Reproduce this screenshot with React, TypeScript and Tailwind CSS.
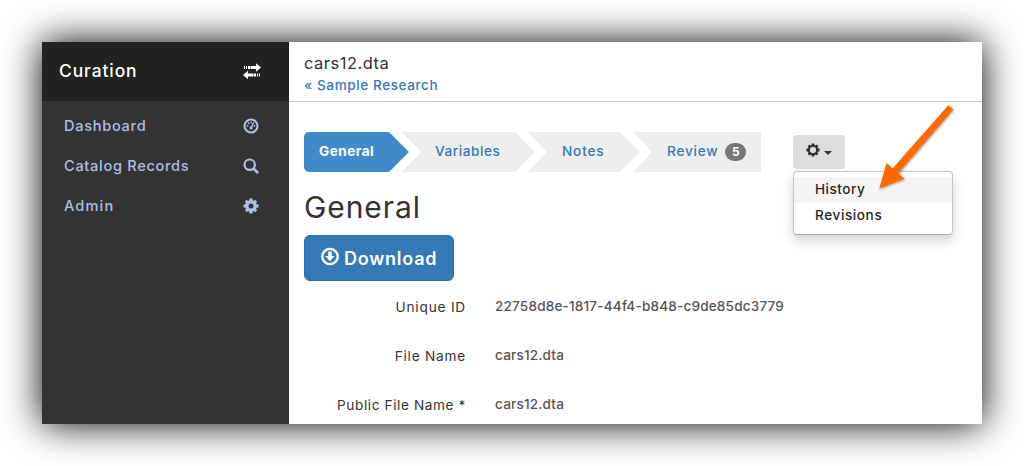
import type { ReactNode } from "react";

function Cog({ className, thin }: { className: string; thin?: boolean }) {
  return (
    <svg viewBox="0 0 16 16" className={className}>
      <g stroke="currentColor" strokeWidth="3.2">
        <path d="M8 .5v4M8 11.500v4M.5 8h4M11.500 8h4" />
        <path d="M2.800 2.800l2.600 2.600M10.600 10.600l2.600 2.600M2.800 13.200l2.600-2.600M10.600 5.400l2.600-2.600" strokeWidth="2.800" />
      </g>
      <circle cx="8" cy="8" r={thin ? 4.7 : 4.2} fill="none" stroke="currentColor" strokeWidth={thin ? 2.8 : 3.4} />
      {thin && <circle cx="8" cy="8" r="3.400" fill="#dddddd" />}
    </svg>
  );
}

function Swap() {
  return (
    <svg viewBox="0 0 18 16" className="h-4 w-[18px] -translate-y-px" fill="#fff">
      <path d="M1 3h1v3H1zM3 3h1v3H3zM5 3h2v3H5zM7.500 3h5.500V.3l5 4.200-5 4.200V6H7.500z" />
      <path d="M17 10.500h-1v3h1zM15 10.500h-1v3h1zM13 10.500h-2v3h2zM10.500 10.500H5V7.800L0 12l5 4.200v-2.700h5.500z" />
    </svg>
  );
}

function Dial() {
  return (
    <svg viewBox="0 0 16 16" className="size-4" fill="currentColor">
      <circle cx="8" cy="8" r="6.500" fill="none" stroke="currentColor" strokeWidth="2.100" />
      <circle cx="4.600" cy="7.800" r=".9" />
      <circle cx="5.800" cy="5.200" r=".9" />
      <circle cx="8.300" cy="4.600" r=".8" />
      <circle cx="11.500" cy="7.800" r=".9" />
      <path d="M10 4.200l1.300.6-2 4.200a1.500 1.500 0 1 1-1.400-.6z" />
    </svg>
  );
}

function Search() {
  return (
    <svg viewBox="0 0 16 16" className="size-4" fill="none" stroke="currentColor">
      <circle cx="6.700" cy="6.700" r="5.200" strokeWidth="2.200" />
      <path d="M10.400 10.400l4.700 4.700" strokeWidth="2.700" />
    </svg>
  );
}

function DownloadIcon() {
  return (
    <svg viewBox="0 0 18 18" className="size-[18px] -translate-y-[1.5px]">
      <circle cx="9" cy="9" r="7.700" fill="none" stroke="#fff" strokeWidth="2.400" />
      <path d="M7.200 4h3.600v4.500h2.900L9 13.800 4.300 8.500h2.900z" fill="#fff" />
    </svg>
  );
}

function NavItem({ label, icon }: { label: ReactNode; icon: ReactNode }) {
  return (
    <li className="flex h-10 items-center justify-between pr-[30px] pl-[22px] text-[14.550px] font-medium text-[#b1bfe3]">
      {label}
      {icon}
    </li>
  );
}

function Field({ label, value }: { label: ReactNode; value: ReactNode }) {
  return (
    <div className="flex h-[49px] items-start leading-5">
      <dt className="mt-px w-[162px] text-right text-[#333]">{label}</dt>
      <dd className="ml-[29px] font-medium text-[#555]">{value}</dd>
    </div>
  );
}

export default function App() {
  return (
    <div className="h-[466px] w-[1024px] overflow-hidden bg-white p-[42px] font-['Inter',sans-serif] text-[13.580px] text-[#333]">
      <div className="flex h-[382px] w-[940px] bg-white shadow-[0_0_36px_#000]">
        <aside className="w-[247px] shrink-0 bg-[#333]">
          <div className="flex h-[59px] items-center justify-between bg-[#222] pr-[28px] pl-[17px] text-[17.460px] font-medium tracking-[0.910px] text-white">
            Curation
            <Swap />
          </div>
          <ul className="pt-[5px]">
            <NavItem label={<span className="pt-[2px] tracking-[0.720px]">Dashboard</span>} icon={<Dial />} />
            <NavItem label={<span className="pt-[2px] tracking-[0.710px]">Catalog Records</span>} icon={<Search />} />
            <NavItem label={<span className="pt-[2px] tracking-[1.150px]">Admin</span>} icon={<Cog className="size-4" />} />
          </ul>
        </aside>

        <main className="min-w-0 flex-1">
          <header className="h-[60px] border-b border-[#c8c8c8] pt-[10px] pl-[15px]">
            <div className="text-[16.490px] leading-[23px] tracking-[0.490px]">cars12.dta</div>
            <a className="block font-medium leading-5 tracking-[0.570px] text-[#337ab7]">« Sample Research</a>
          </header>

          <div className="flex pt-[30px] pl-[15px]">
            <nav className="flex h-10 w-[457px] items-center font-medium text-[#337ab7]">
              <div className="flex h-10 w-[105px] items-center rounded-l-[5px] bg-[#428bca] pb-px pl-[15px] font-bold tracking-[0.500px] text-white [clip-path:polygon(0_0,85px_0,100%_50%,85px_100%,0_100%)]">
                General
              </div>
              <div className="-ml-[7px] flex h-10 w-[133px] items-center bg-[#eee] pb-px pl-[33px] tracking-[0.560px] [clip-path:polygon(0_0,113px_0,100%_50%,113px_100%,0_100%,19px_50%)]">
                Variables
              </div>
              <div className="-ml-[7px] flex h-10 w-[112px] items-center bg-[#eee] pb-px pl-[34px] tracking-[0.830px] [clip-path:polygon(0_0,92px_0,100%_50%,92px_100%,0_100%,19px_50%)]">
                Notes
              </div>
              <div className="-ml-[7px] flex h-10 w-[128px] items-center bg-[#eee] pb-px pl-[34px] tracking-[0.810px] [clip-path:polygon(0_0,100%_0,100%_100%,0_100%,19px_50%)]">
                Review
                <span className="mt-px ml-[7px] flex h-[18px] w-[21px] items-center justify-center rounded-[10px] bg-[#777] text-xs font-bold tracking-normal text-white">
                  5
                </span>
              </div>
            </nav>

            <div className="relative ml-[32px] pt-[3px]">
              <button className="flex h-[34px] w-[52px] items-center rounded-[4px] bg-[#ddd] pb-1 pl-[13px]">
                <Cog thin className="size-[14px]" />
                <svg viewBox="0 0 8 4" className="mt-[5px] ml-[4px] h-1 w-2" fill="#333">
                  <path d="M0 0h8L4 4z" />
                </svg>
              </button>
              <ul className="absolute top-[39px] left-0 z-10 h-16 w-40 rounded-[4px] border border-[#c4c4c4] border-b-[#aaa] bg-white py-[5px] font-medium text-[#262626] shadow-[0_6px_12px_rgba(0,0,0,0.175)]">
                <li className="flex h-[26px] items-center bg-[#f5f5f5] pb-[2px] pl-[21px] tracking-[0.490px]">History</li>
                <li className="flex h-[26px] items-center pb-[2px] pl-[21px] tracking-[0.590px]">Revisions</li>
              </ul>
              <svg viewBox="0 0 84 90" className="absolute top-[-32px] left-[82px] z-20 h-[90px] w-[84px] drop-shadow-[1px_1px_1px_rgba(0,0,0,0.35)]">
                <path d="M73.300 5.300L78.200 9.500 23.200 73.300 29.200 78.800 4.300 88.500 11.500 63 17.500 68.500Z" fill="#ff6a00" />
              </svg>
            </div>
          </div>

          <h2 className="mt-[19px] ml-[15px] text-[30px] leading-[33px] tracking-[0.900px]">General</h2>
          <button className="mt-[11px] ml-[15px] flex h-[46px] w-[150px] items-center rounded-[6px] border border-[#2e6da4] bg-[#337ab7] pl-4 text-[18px] font-semibold tracking-[0.750px] text-white">
            <DownloadIcon />
            <span className="ml-[5px]">Download</span>
          </button>

          <dl className="mt-[15px] h-[128px] overflow-hidden pl-[15px]">
            <Field
              label={<span className="tracking-[0.830px]">Unique ID</span>}
              value={<span className="tracking-[0.170px]">22758d8e-1817-44f4-b848-c9de85dc3779</span>}
            />
            <Field
              label={<span className="tracking-[0.820px]">File Name</span>}
              value={<span className="tracking-[0.170px]">cars12.dta</span>}
            />
            <Field
              label={<span className="tracking-[0.620px]">Public File Name *</span>}
              value={<span className="tracking-[0.170px]">cars12.dta</span>}
            />
          </dl>
        </main>
      </div>
    </div>
  );
}
